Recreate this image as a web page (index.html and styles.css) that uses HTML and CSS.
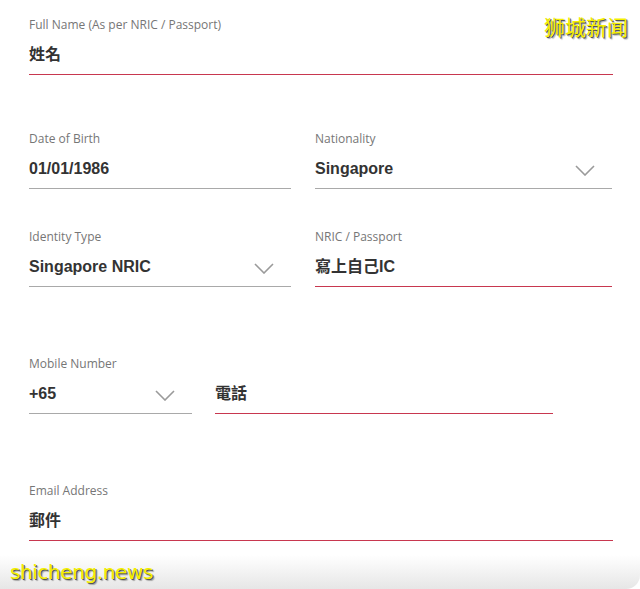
FILE: index.html
```html
<!DOCTYPE html>
<html lang="en">
<head>
    <meta charset="UTF-8">
    <meta name="viewport" content="width=device-width, initial-scale=1.0">
    <title>Personal Details</title>
    <link rel="stylesheet" href="styles.css">
</head>
<body>
    <div class="card">
        <form class="form">
            <div class="row row-full gap-54">
                <div class="field active">
                    <label class="label">Full Name (As per NRIC / Passport)</label>
                    <div class="value">姓名</div>
                </div>
            </div>

            <div class="row row-two gap-38">
                <div class="field">
                    <label class="label">Date of Birth</label>
                    <div class="value">01/01/1986</div>
                </div>
                <div class="field select">
                    <label class="label">Nationality</label>
                    <div class="value">Singapore</div>
                    <svg class="chevron" width="20" height="11" viewBox="0 0 20 11"><path d="M1 1 L10 10 L19 1" fill="none" stroke="#9a9a9a" stroke-width="1.6"/></svg>
                </div>
            </div>

            <div class="row row-two gap-67">
                <div class="field select">
                    <label class="label">Identity Type</label>
                    <div class="value">Singapore NRIC</div>
                    <svg class="chevron" width="20" height="11" viewBox="0 0 20 11"><path d="M1 1 L10 10 L19 1" fill="none" stroke="#9a9a9a" stroke-width="1.6"/></svg>
                </div>
                <div class="field active">
                    <label class="label">NRIC / Passport</label>
                    <div class="value">寫上自己IC</div>
                </div>
            </div>

            <div class="row row-phone gap-67">
                <div class="field select">
                    <label class="label">Mobile Number</label>
                    <div class="value">+65</div>
                    <svg class="chevron" width="20" height="11" viewBox="0 0 20 11"><path d="M1 1 L10 10 L19 1" fill="none" stroke="#9a9a9a" stroke-width="1.6"/></svg>
                </div>
                <div class="field active">
                    <label class="label">&nbsp;</label>
                    <div class="value">電話</div>
                </div>
            </div>

            <div class="row row-full">
                <div class="field active">
                    <label class="label">Email Address</label>
                    <div class="value">郵件</div>
                </div>
            </div>
        </form>
        <div class="card-bottom"></div>
    </div>

    <div class="mark mark-top">狮城新闻</div>
    <div class="mark mark-bottom">shicheng.news</div>
</body>
</html>
```

FILE: styles.css
```css
body {
    margin: 0;
    background: #fff;
    font-family: "Open Sans", "Noto Sans CJK SC", sans-serif;
    width: 640px;
    height: 589px;
    overflow: hidden;
    position: relative;
}
.card {
    height: 589px;
    display: flex;
    flex-direction: column;
}
.form {
    padding: 15px 27px 0 29px;
    flex: 1;
}
.row {
    display: grid;
}
.gap-54 {
    margin-bottom: 54px;
}
.gap-38 {
    margin-bottom: 38px;
}
.gap-67 {
    margin-bottom: 67px;
}
.row-full {
    grid-template-columns: 584px;
}
.row-two {
    grid-template-columns: 262px 297px;
    column-gap: 24px;
}
.row-phone {
    grid-template-columns: 163px 338px;
    column-gap: 23px;
}
.field {
    position: relative;
    border-bottom: 1px solid #a9a9a9;
    padding-bottom: 8px;
}
.field.active {
    border-bottom: 1px solid #c8374f;
}
.label {
    display: block;
    font-size: 12px;
    line-height: 20px;
    color: #767676;
    margin-bottom: 9px;
}
.value {
    font-family: "Liberation Sans", "Noto Sans CJK TC", sans-serif;
    font-weight: bold;
    font-size: 16px;
    line-height: 22px;
    color: #333;
}
.chevron {
    position: absolute;
    right: 17px;
    bottom: 12px;
}
.card-bottom {
    height: 34px;
    background: linear-gradient(#ffffff, #e6e6e6);
    border-bottom-right-radius: 14px;
}
.mark {
    position: absolute;
    color: #f4ef00;
    text-shadow: 1px 1px 0 #555, 2px 2px 1px rgba(0,0,0,0.3);
}
.mark-top {
    top: 12px;
    right: 12px;
    font-family: "Noto Sans CJK SC", sans-serif;
    font-size: 21px;
    line-height: 28px;
}
.mark-bottom {
    left: 10px;
    bottom: 4px;
    font-family: "DejaVu Sans", sans-serif;
    font-size: 20px;
    line-height: 26px;
    letter-spacing: -0.4px;
}
```
